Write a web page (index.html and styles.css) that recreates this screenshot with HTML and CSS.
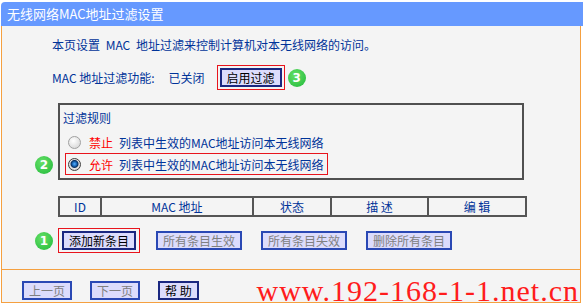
FILE: index.html
```html
<!DOCTYPE html>
<html lang="zh-CN">
<head>
    <meta charset="UTF-8">
    <title>无线网络MAC地址过滤设置</title>
    <link rel="stylesheet" href="styles.css">
</head>
<body>
    <div class="page">
        <div class="title">无线网络MAC地址过滤设置</div>

        <div class="main">
            <p class="intro">本页设置 MAC 地址过滤来控制计算机对本无线网络的访问。</p>

            <div class="status">
                <span class="label">MAC 地址过滤功能:</span>
                <span class="state">已关闭</span>
                <span class="mark"><button class="btn on">启用过滤</button></span>
                <span class="badge">3</span>
            </div>

            <div class="rules">
                <div class="rules-title">过滤规则</div>
                <label class="rule">
                    <span class="radio"></span><em>禁止</em>列表中生效的MAC地址访问本无线网络
                </label>
                <label class="rule mark">
                    <span class="radio checked"></span><em>允许</em>列表中生效的MAC地址访问本无线网络
                </label>
                <span class="badge badge-rule">2</span>
            </div>

            <div class="list">
                <div class="cell">ID</div>
                <div class="cell">MAC 地址</div>
                <div class="cell">状态</div>
                <div class="cell">描 述</div>
                <div class="cell">编 辑</div>
            </div>

            <div class="actions">
                <span class="badge">1</span>
                <span class="mark"><button class="btn on">添加新条目</button></span>
                <button class="btn off">所有条目生效</button>
                <button class="btn off">所有条目失效</button>
                <button class="btn off">删除所有条目</button>
            </div>
        </div>

        <div class="footer">
            <button class="btn off">上一页</button>
            <button class="btn off">下一页</button>
            <button class="btn on">帮 助</button>
            <span class="watermark">www.192-168-1-1.net.cn</span>
        </div>
    </div>
</body>
</html>
```

FILE: styles.css
```css
:root {
    --head-color: #6699ff;
    --panel-color: #f4f4f4;
    --edge-color: #f5a040;
    --text-color: #003399;
    --mark-color: #e8141c;
}

body {
    margin: 0;
    background-color: #ffffff;
    font-family: "Noto Sans CJK SC", "Noto Sans", sans-serif;
    font-size: 12px;
    color: var(--text-color);
}

.page {
    padding-top: 2px;
    width: 583px;
}

.title {
    margin-left: 1px;
    height: 24px;
    line-height: 24px;
    padding-left: 6px;
    background-color: var(--head-color);
    border-top-left-radius: 4px;
    color: #ffffff;
    font-size: 13px;
}

.main {
    margin-left: 1px;
    width: 578px;
    padding: 11px 0 16px;
    background-color: var(--panel-color);
    border-left: 1px solid var(--edge-color);
    border-right: 1px solid var(--edge-color);
}

.intro {
    margin: 0 0 0 50px;
    line-height: 16px;
    word-spacing: 3px;
}

.status {
    display: flex;
    align-items: center;
    margin: 12px 0 0 50px;
}

.state {
    margin-left: 14px;
}

.status .mark {
    margin-left: 12px;
}

.mark {
    display: inline-flex;
    padding: 2px;
    border: 1px solid var(--mark-color);
}

.btn {
    height: 19px;
    padding: 0 5px;
    background-color: #dcdcfc;
    border: 2px solid #2a48b4;
    font-family: "Noto Sans CJK SC", sans-serif;
    font-size: 12px;
    line-height: 15px;
}

.btn.on {
    color: #000000;
    border-color: #1a2780;
}

.btn.off {
    color: #808080;
}

.badge {
    display: inline-flex;
    align-items: center;
    justify-content: center;
    width: 18px;
    height: 18px;
    border-radius: 50%;
    background: radial-gradient(circle at 40% 35%, #66e066, #1fb83a);
    color: #ffffff;
    font-family: "DejaVu Sans", sans-serif;
    font-weight: bold;
    font-size: 12px;
}

.status .badge {
    margin-left: 3px;
}

.rules {
    position: relative;
    display: flex;
    flex-direction: column;
    align-items: flex-start;
    margin: 13px 0 0 56px;
    width: 462px;
    padding: 5px 0 3px 5px;
    border: 2px solid #505050;
    box-sizing: border-box;
    width: 466px;
}

.rules-title {
    line-height: 16px;
    margin-bottom: 5px;
    margin-left: -2px;
}

.rule {
    display: inline-flex;
    align-items: center;
    height: 20px;
    padding: 0 3px 0 2px;
    border: 1px solid transparent;
}

.rule em {
    font-style: normal;
    color: #ff0000;
    margin: 0 6px 0 8px;
}

.radio {
    width: 11px;
    height: 11px;
    border-radius: 50%;
    border: 1px solid #a0a0a0;
    background: radial-gradient(circle at 40% 35%, #ffffff, #d0d0d0);
}

.radio.checked {
    border-color: #404040;
    background: radial-gradient(circle at 50% 45%, #5ab0ff 0, #1a6ec0 2px, #0a3060 3.5px, #e4e4e4 4.5px, #bcbcbc);
}

.rule.mark {
    padding: 0 3px 0 2px;
    border-color: var(--mark-color);
}

.badge-rule {
    position: absolute;
    left: -25px;
    top: 51px;
}

.list {
    display: grid;
    grid-template-columns: 40px 150px 76px 95px 96px;
    gap: 2px;
    padding: 2px;
    margin: 16px 0 0 56px;
    width: 465px;
    background-color: #555555;
}

.cell {
    height: 17px;
    line-height: 17px;
    text-align: center;
    background-color: var(--panel-color);
}

.actions {
    display: flex;
    align-items: center;
    margin: 11px 0 0 33px;
}

.actions .badge {
    margin-right: 5px;
}

.actions .mark {
    padding: 2px 3px;
    margin-right: 16px;
}

.actions .btn.off {
    margin-right: 19px;
}

.footer {
    position: relative;
    display: flex;
    align-items: flex-start;
    gap: 18px;
    margin-left: 1px;
    width: 558px;
    height: 21px;
    padding: 11px 0 0 20px;
    background-color: var(--panel-color);
    border: 1px solid var(--edge-color);
}

.watermark {
    position: absolute;
    right: 1px;
    top: 6px;
    line-height: 30px;
    white-space: nowrap;
    font-family: "Liberation Serif", serif;
    font-size: 30px;
    letter-spacing: 1px;
    color: #ff1c1c;
}
```
